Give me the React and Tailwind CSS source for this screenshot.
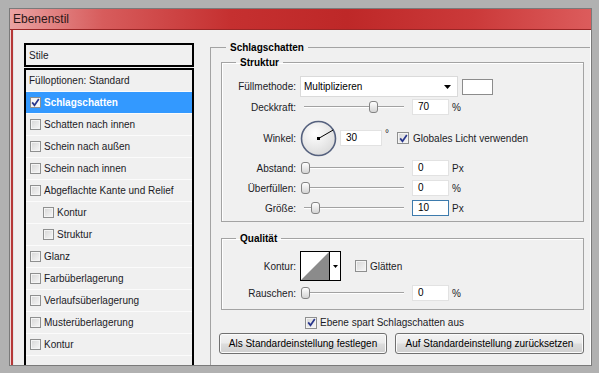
import React from 'react';

// checkbox in the classic Windows look
const Check = ({ checked = false, size = 'w-[12px] h-[12px]', white = false }) => (
  <span
    className={`flex shrink-0 items-center justify-center ${size} border border-[#8e8f8f] ${
      white ? 'bg-[#f7f7f7]' : 'bg-[linear-gradient(135deg,#d6d6d6,#f7f7f7)]'
    } shadow-[inset_0_0_0_1px_#f4f4f4]`}
  >
    {checked && (
      <svg width="9" height="9" viewBox="0 0 9 9">
        <path d="M1.2 4.4 L3.5 7.3 L7.8 1.1" fill="none" stroke="#27358c" strokeWidth="1.7" />
      </svg>
    )}
  </span>
);

const Slider = ({ thumb }) => (
  <div className="relative w-[104px] h-[14px] shrink-0">
    <div className="absolute left-[4px] right-0 top-[6px] h-px bg-[#a2a2a2] shadow-[0_1px_0_#ffffff]" />
    <div
      className={`absolute top-[1px] w-[9px] h-[12px] rounded-[3px] border border-[#848484] bg-[linear-gradient(#ffffff,#d4d4d4)] ${thumb}`}
    />
  </div>
);

const Num = ({ value, focus = false, w = 'w-[37px]' }) => (
  <div
    className={`${w} h-[16px] shrink-0 bg-white border ${
      focus ? 'border-[#3d7bad]' : 'border-[#e2e2e2]'
    } pl-[5px] leading-[14px] text-black`}
  >
    {value}
  </div>
);

const Row = ({ label, children, className = '' }) => (
  <div className={`flex items-center ${className}`}>
    <span className="w-[74px] shrink-0 text-right">{label}</span>
    <div className="flex items-center pl-[4px]">{children}</div>
  </div>
);

const SliderRow = ({ label, thumb, value, unit, focus, className }) => (
  <Row label={label} className={`h-[16px] ${className}`}>
    <Slider thumb={thumb} />
    <div className="ml-[8px]">
      <Num value={value} focus={focus} />
    </div>
    <span className="ml-[3px]">{unit}</span>
  </Row>
);

const items = [
  { label: 'Fülloptionen: Standard', box: false },
  { label: 'Schlagschatten', box: true, checked: true, active: true },
  { label: 'Schatten nach innen', box: true },
  { label: 'Schein nach außen', box: true },
  { label: 'Schein nach innen', box: true },
  { label: 'Abgeflachte Kante und Relief', box: true },
  { label: 'Kontur', box: true, indent: true },
  { label: 'Struktur', box: true, indent: true },
  { label: 'Glanz', box: true },
  { label: 'Farbüberlagerung', box: true },
  { label: 'Verlaufsüberlagerung', box: true },
  { label: 'Musterüberlagerung', box: true },
  { label: 'Kontur', box: true },
];

const Button = ({ children, w }) => (
  <div
    className={`${w} h-[21px] shrink-0 flex items-center justify-center rounded-[3px] border border-[#707070] bg-[linear-gradient(#f3f3f3_0%,#ebebeb_48%,#dddddd_52%,#cfcfcf_100%)] shadow-[inset_0_0_0_1px_#fbfbfb] text-black`}
  >
    {children}
  </div>
);

export default function App() {
  return (
    <div className="w-[599px] h-[373px] bg-[#b1b1b1] pt-[8px] pl-[9px] pr-[7px] pb-[7px] flex font-['Liberation_Sans',Arial,sans-serif] text-[10px] text-[#1b1b26]">
      <div className="flex-1 min-w-0 flex flex-col border border-[#7a7a7a]">
        {/* title bar */}
        <div className="h-[21px] shrink-0 flex items-center pl-[3px] border-b border-[#9b2626] bg-[linear-gradient(to_right,#eaa2a2_0%,#d75c5c_16%,#c53030_38%,#be2828_58%,#cb3a3a_80%,#dc5c5c_100%)] text-[12px] text-[#2a1616]">
          Ebenenstil
        </div>

        <div className="flex-1 min-h-0 flex">
          <div className="w-[4px] shrink-0 bg-[linear-gradient(to_right,#f2d4d4_0_1px,#b53838_1px_3px,#e4e4e4_3px)]" />
          <div className="flex-1 min-w-0 flex bg-[#f0f0f0] border-r border-white pl-[10px]">
            {/* style list */}
            <div className="w-[170px] shrink-0 pt-[13px] flex flex-col">
              <div className="h-[24px] shrink-0 border-2 border-black flex items-center pl-[3px]">Stile</div>
              <div className="mt-[1px] flex-1 border-2 border-b-0 border-black">
                {items.map((it, i) => (
                  <div
                    key={i}
                    className={`h-[22px] flex items-center border-b border-[#fbfbfb] ${
                      it.indent ? 'pl-[17px]' : 'pl-[4px]'
                    } ${it.active ? 'bg-[#3399ff] text-white font-bold' : ''}`}
                  >
                    {it.box && <Check checked={it.checked} white={it.active} size="w-[11px] h-[11px]" />}
                    <span className={it.box ? 'ml-[3px]' : 'ml-[-1px]'}>{it.label}</span>
                  </div>
                ))}
              </div>
            </div>

            {/* settings */}
            <div className="flex-1 min-w-0 ml-[16px] pt-[11px] flex flex-col">
              <fieldset className="flex-1 border-t border-l border-[#a3a3a3] pl-[10px] pr-[6px]">
                <legend className="ml-[5px] px-[4px] leading-[13px] font-bold text-black">Schlagschatten</legend>

                <fieldset className="mt-[2px] border border-[#a3a3a3] shadow-[inset_1px_1px_0_#ffffff] pb-[5px]">
                  <legend className="ml-[14px] px-[4px] leading-[13px] font-bold text-black">Struktur</legend>

                  <Row label="Füllmethode:" className="mt-[7px] h-[21px]">
                    <div className="w-[158px] h-[21px] bg-white border border-[#dadada] flex items-center justify-between pl-[3px] pr-[6px] text-black">
                      <span>Multiplizieren</span>
                      <svg width="7" height="4" viewBox="0 0 7 4">
                        <polygon points="0,0 7,0 3.5,4" fill="#000" />
                      </svg>
                    </div>
                    <div className="ml-[4px] w-[31px] h-[16px] bg-white border border-[#8c8c8c]" />
                  </Row>

                  <SliderRow label="Deckkraft:" thumb="left-[69px]" value="70" unit="%" className="mt-[2px]" />

                  <Row label="Winkel:" className="mt-[5px] h-[36px]">
                    <svg width="37" height="37" viewBox="0 0 37 37" className="shrink-0">
                      <defs>
                        <radialGradient id="dial" cx="40%" cy="35%" r="70%">
                          <stop offset="0" stopColor="#ffffff" />
                          <stop offset="1" stopColor="#dadada" />
                        </radialGradient>
                      </defs>
                      <circle cx="18.5" cy="18.5" r="17" fill="url(#dial)" stroke="#55617e" strokeWidth="1.6" />
                      <line x1="18.5" y1="18.5" x2="33.2" y2="10" stroke="#000" strokeWidth="1" />
                      <rect x="17" y="17" width="3" height="3" fill="#000" />
                    </svg>
                    <div className="ml-[3px]">
                      <Num value="30" w="w-[42px]" />
                    </div>
                    <span className="ml-[3px] self-start mt-[6px]">°</span>
                    <div className="ml-[8px]">
                      <Check checked />
                    </div>
                    <span className="ml-[4px]">Globales Licht verwenden</span>
                  </Row>

                  <SliderRow label="Abstand:" thumb="left-[1px]" value="0" unit="Px" className="mt-[4px]" />
                  <SliderRow label="Überfüllen:" thumb="left-[1px]" value="0" unit="%" className="mt-[4px]" />
                  <SliderRow label="Größe:" thumb="left-[11px]" value="10" unit="Px" focus className="mt-[4px]" />
                </fieldset>

                <fieldset className="mt-[10px] border border-[#a3a3a3] shadow-[inset_1px_1px_0_#ffffff] pb-[8px]">
                  <legend className="ml-[14px] px-[4px] leading-[13px] font-bold text-black">Qualität</legend>

                  <Row label="Kontur:" className="mt-[6px] h-[30px]">
                    <div className="w-[41px] h-[30px] flex border border-black bg-white">
                      <svg width="28" height="28" viewBox="0 0 28 28" className="shrink-0">
                        <polygon points="0,28 28,0 28,28" fill="#8b8b8b" />
                      </svg>
                      <div className="flex-1 border-l border-black flex items-center justify-center">
                        <svg width="5" height="3" viewBox="0 0 5 3">
                          <polygon points="0,0 5,0 2.5,3" fill="#000" />
                        </svg>
                      </div>
                    </div>
                    <div className="ml-[14px]">
                      <Check />
                    </div>
                    <span className="ml-[3px]">Glätten</span>
                  </Row>

                  <SliderRow label="Rauschen:" thumb="left-[1px]" value="0" unit="%" className="mt-[4px]" />
                </fieldset>

                <div className="mt-[6px] ml-[84px] h-[13px] flex items-center">
                  <Check checked />
                  <span className="ml-[3px]">Ebene spart Schlagschatten aus</span>
                </div>

                <div className="mt-[4px] ml-[-2px] flex gap-[8px]">
                  <Button w="w-[168px]">Als Standardeinstellung festlegen</Button>
                  <Button w="w-[189px]">Auf Standardeinstellung zurücksetzen</Button>
                </div>
              </fieldset>
            </div>
          </div>
        </div>
      </div>
    </div>
  );
}
